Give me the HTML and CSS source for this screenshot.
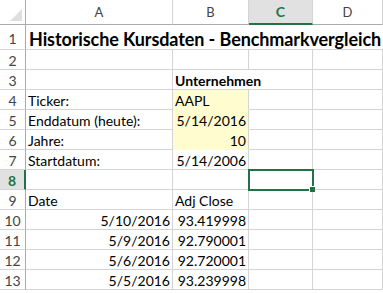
FILE: index.html
```html
<!DOCTYPE html>
<html lang="de">
<head>
  <meta charset="UTF-8" />
  <title>Historische Kursdaten</title>
  <link rel="stylesheet" href="styles.css">
</head>
<body>
  <div class="sheet">
    <div class="corner"><span class="tri"></span></div>
    <div class="ch">A</div>
    <div class="ch">B</div>
    <div class="ch active">C</div>
    <div class="ch">D</div>

    <div class="rh tall">1</div>
    <div class="cell tall title span4">Historische Kursdaten - Benchmarkvergleich</div>

    <div class="rh">2</div>
    <div class="cell"></div><div class="cell"></div><div class="cell"></div><div class="cell"></div>

    <div class="rh">3</div>
    <div class="cell"></div><div class="cell bold span2">Unternehmen</div><div class="cell"></div>

    <div class="rh">4</div>
    <div class="cell">Ticker:</div><div class="cell fill">AAPL</div><div class="cell"></div><div class="cell"></div>

    <div class="rh">5</div>
    <div class="cell">Enddatum (heute):</div><div class="cell fill num">5/14/2016</div><div class="cell"></div><div class="cell"></div>

    <div class="rh">6</div>
    <div class="cell">Jahre:</div><div class="cell fill num">10</div><div class="cell"></div><div class="cell"></div>

    <div class="rh">7</div>
    <div class="cell">Startdatum:</div><div class="cell num">5/14/2006</div><div class="cell"></div><div class="cell"></div>

    <div class="rh active">8</div>
    <div class="cell"></div><div class="cell"></div><div class="cell selected"></div><div class="cell"></div>

    <div class="rh">9</div>
    <div class="cell">Date</div><div class="cell">Adj Close</div><div class="cell"></div><div class="cell"></div>

    <div class="rh">10</div>
    <div class="cell num">5/10/2016</div><div class="cell num">93.419998</div><div class="cell"></div><div class="cell"></div>

    <div class="rh">11</div>
    <div class="cell num">5/9/2016</div><div class="cell num">92.790001</div><div class="cell"></div><div class="cell"></div>

    <div class="rh">12</div>
    <div class="cell num">5/6/2016</div><div class="cell num">92.720001</div><div class="cell"></div><div class="cell"></div>

    <div class="rh">13</div>
    <div class="cell num">5/5/2016</div><div class="cell num">93.239998</div><div class="cell"></div><div class="cell"></div>
  </div>
</body>
</html>
```

FILE: styles.css
```css
body {
  margin: 0;
  background: #fff;
  font-family: 'Lato', 'Liberation Sans', sans-serif;
  font-size: 14px;
  color: #000;
  overflow: hidden;
}
.sheet {
  display: grid;
  grid-template-columns: 26px 147px 76px 64px 70px;
  grid-auto-rows: 20px;
  grid-template-rows: 25px 25px;
  width: 383px;
}
.corner, .ch, .rh, .cell {
  box-sizing: border-box;
  border-right: 1px solid #d4d4d4;
  border-bottom: 1px solid #d4d4d4;
}
.corner {
  position: relative;
  border-color: #ababab;
}
.tri {
  position: absolute;
  right: 3px;
  bottom: 3px;
  width: 0;
  height: 0;
  border-left: 12px solid transparent;
  border-bottom: 12px solid #dfdfdf;
}
.ch {
  text-align: center;
  line-height: 24px;
  color: #444;
  font-size: 13px;
  border-bottom-color: #ababab;
}
.ch.active {
  background: #e1e1e1;
  color: #217346;
  font-weight: 700;
  font-size: 14px;
  border-bottom: 2px solid #217346;
  line-height: 23px;
}
.rh {
  grid-column: 1;
  text-align: center;
  color: #444;
  font-size: 14px;
  line-height: 21px;
  border-right-color: #ababab;
}
.rh.tall {
  line-height: 28px;
}
.rh.active {
  background: #e1e1e1;
  color: #217346;
  font-weight: 700;
  border-right: 2px solid #217346;
}
.cell {
  padding: 0 2px;
  line-height: 21px;
  white-space: nowrap;
}
.span4 {
  grid-column: span 4;
  border-right: none;
}
.span2 {
  grid-column: span 2;
}
.title {
  font-size: 18px;
  font-weight: 700;
  line-height: 28px;
  padding-left: 3px;
  letter-spacing: -0.1px;
}
.bold {
  font-weight: 700;
}
.num {
  text-align: right;
}
.fill {
  background: #fffcd0;
  border-bottom-color: #fffcd0;
}
.selected {
  position: relative;
}
.selected::after {
  content: "";
  position: absolute;
  left: -1px;
  top: -1px;
  right: -2px;
  bottom: -2px;
  border: 2px solid #217346;
}
.selected::before {
  content: "";
  position: absolute;
  right: -3px;
  bottom: -3px;
  width: 5px;
  height: 5px;
  background: #217346;
  border-left: 1px solid #fff;
  border-top: 1px solid #fff;
  z-index: 1;
}
```
